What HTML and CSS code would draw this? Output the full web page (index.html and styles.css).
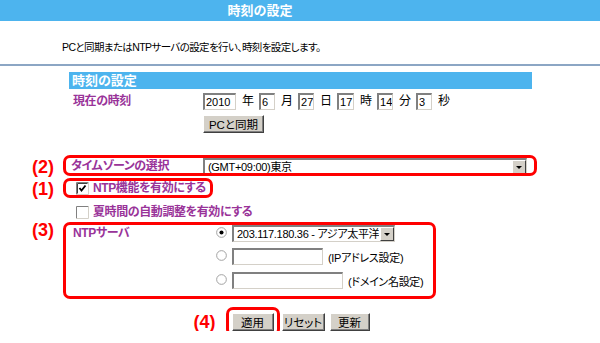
FILE: index.html
```html
<!DOCTYPE html>
<html lang="ja">
<head>
    <meta charset="UTF-8">
    <title>時刻の設定</title>
    <link rel="stylesheet" href="styles.css">
</head>
<body>
    <div class="title">時刻の設定</div>
    <div class="intro">PCと同期またはNTPサーバの設定を行い、時刻を設定します。</div>

    <div class="section">
        <div class="section-head">時刻の設定</div>

        <div class="row time-row">
            <div class="label">現在の時刻</div>
            <div class="fields">
                <input class="txt w33" value="2010"><span class="unit">年</span>
                <input class="txt w16" value="6"><span class="unit">月</span>
                <input class="txt w16" value="27"><span class="unit">日</span>
                <input class="txt w17" value="17"><span class="unit">時</span>
                <input class="txt w16" value="14"><span class="unit">分</span>
                <input class="txt w16" value="3"><span class="unit">秒</span>
            </div>
        </div>
        <div class="row sync-row">
            <div></div>
            <div class="fields"><button class="btn w61">PCと同期</button></div>
        </div>

        <div class="row tz-row">
            <span class="num">(2)</span>
            <span class="mark"></span>
            <div class="label tz-label">タイムゾーンの選択</div>
            <div class="select w324">
                <span class="select-text">(GMT+09:00)東京</span>
                <span class="select-arrow"></span>
            </div>
        </div>

        <div class="check-row ntp-on">
            <span class="num">(1)</span>
            <span class="mark"></span>
            <svg class="box" width="13" height="13" viewBox="0 0 13 13">
                <rect x="0" y="0" width="13" height="13" fill="#fff"/>
                <path d="M0.5 12.5V0.5H12.5" fill="none" stroke="#808080"/>
                <path d="M1.5 11.5V1.5H11.5" fill="none" stroke="#404040"/>
                <path d="M0.5 12.5H12.5V0.5" fill="none" stroke="#d4d0c8"/>
                <path d="M3.5 6L5.5 8.5L9.5 3.5" fill="none" stroke="#000" stroke-width="1.8"/>
            </svg>
            <span class="label-text">NTP機能を有効にする</span>
        </div>
        <div class="check-row dst">
            <svg class="box" width="13" height="13" viewBox="0 0 13 13">
                <rect x="0" y="0" width="13" height="13" fill="#fff"/>
                <path d="M0.5 12.5V0.5H12.5" fill="none" stroke="#808080"/>
                <path d="M0.5 12.5H12.5V0.5" fill="none" stroke="#d4d0c8"/>
            </svg>
            <span class="label-text">夏時間の自動調整を有効にする</span>
        </div>

        <div class="ntp">
            <span class="num">(3)</span>
            <span class="mark"></span>
            <div class="label ntp-label">NTPサーバ</div>
            <div class="ntp-options">
                <div class="opt">
                    <svg class="radio" width="11" height="11" viewBox="0 0 12 12">
                        <circle cx="6" cy="6" r="5.3" fill="#fff" stroke="#9a9a9a"/>
                        <circle cx="6" cy="6" r="2.2" fill="#000"/>
                    </svg>
                    <div class="select w163">
                        <span class="select-text">203.117.180.36 - アジア太平洋</span>
                        <span class="select-arrow"></span>
                    </div>
                </div>
                <div class="opt opt2">
                    <svg class="radio" width="11" height="11" viewBox="0 0 12 12">
                        <circle cx="6" cy="6" r="5.3" fill="#fff" stroke="#9a9a9a"/>
                    </svg>
                    <input class="txt w91" value="">
                    <span class="hint">(IPアドレス設定)</span>
                </div>
                <div class="opt opt3">
                    <svg class="radio" width="11" height="11" viewBox="0 0 12 12">
                        <circle cx="6" cy="6" r="5.3" fill="#fff" stroke="#9a9a9a"/>
                    </svg>
                    <input class="txt w111" value="">
                    <span class="hint">(ドメイン名設定)</span>
                </div>
            </div>
        </div>

        <div class="actions">
            <span class="apply-wrap">
                <span class="num">(4)</span>
                <span class="mark"></span>
                <button class="btn w42">適用</button>
            </span>
            <button class="btn w43">リセット</button>
            <button class="btn w40">更新</button>
        </div>
    </div>
</body>
</html>
```

FILE: styles.css
```css
body {
    margin: 0;
    font-family: "Liberation Sans", "Noto Sans CJK JP", sans-serif;
    font-size: 12px;
    font-feature-settings: "palt";
    color: #000;
    background-color: #fff;
}
.title {
    height: 21px;
    line-height: 21px;
    background-color: #4db4ee;
    color: #fff;
    font-weight: bold;
    font-size: 13px;
    text-align: center;
    padding-right: 80px;
}
.intro {
    height: 45px;
    box-sizing: border-box;
    padding: 18px 0 0 62px;
    line-height: 16px;
    font-size: 10.5px;
    letter-spacing: -0.6px;
    border-bottom: 2px solid #8ca6c4;
}
.section {
    width: 463px;
    margin: 6px 0 0 69px;
}
.section-head {
    height: 17px;
    line-height: 17px;
    background-color: #4db4ee;
    color: #fff;
    font-weight: bold;
    font-size: 13px;
    padding-left: 3px;
}
.row {
    display: grid;
    grid-template-columns: 134px 1fr;
    align-items: center;
    position: relative;
}
.label {
    color: #993399;
    font-weight: bold;
    padding-left: 4px;
    line-height: 17px;
    letter-spacing: -0.4px;
}
.fields {
    display: flex;
    align-items: center;
    line-height: 17px;
}
.time-row {
    margin-top: 4px;
    height: 17px;
}
.sync-row {
    margin-top: 5px;
    height: 18px;
}
.unit {
    padding: 0 5px 0 6px;
}
.txt {
    box-sizing: border-box;
    height: 17px;
    border: 1px solid #d4d0c8;
    border-top: 2px solid #808080;
    border-left: 2px solid #808080;
    padding: 0 0 0 1px;
    font: 11px "Liberation Sans", "Noto Sans CJK JP", sans-serif;
    background-color: #fff;
    outline: none;
}
.w16 { width: 16px; }
.w17 { width: 17px; }
.w33 { width: 33px; }
.w91 { width: 91px; }
.w111 { width: 111px; }
.btn {
    box-sizing: border-box;
    height: 18px;
    padding: 0;
    font: 11.5px "Liberation Sans", "Noto Sans CJK JP", sans-serif;
    font-feature-settings: "palt";
    color: #000;
    background-color: #d4d0c8;
    border: 1px solid;
    border-color: #fff #404040 #404040 #fff;
    box-shadow: inset -1px -1px #808080;
    white-space: nowrap;
}
.w40 { width: 40px; }
.w42 { width: 42px; }
.w43 { width: 43px; }
.w61 { width: 61px; }
.select {
    box-sizing: border-box;
    height: 17px;
    display: flex;
    align-items: center;
    justify-content: space-between;
    background-color: #fff;
    border: 1px solid #d4d0c8;
    border-top: 2px solid #808080;
    border-left: 2px solid #808080;
}
.w324 { width: 324px; }
.w163 { width: 163px; }
.select-text {
    padding-left: 3px;
    line-height: 14px;
    font-size: 11px;
    letter-spacing: -0.3px;
    white-space: nowrap;
    overflow: hidden;
}
.select-arrow {
    box-sizing: border-box;
    flex: none;
    width: 14px;
    height: 14px;
    background-color: #d4d0c8;
    border: 1px solid;
    border-color: #fff #404040 #404040 #fff;
    display: flex;
    align-items: center;
    justify-content: center;
}
.select-arrow::after {
    content: "";
    border-left: 3px solid transparent;
    border-right: 3px solid transparent;
    border-top: 3px solid #000;
}
.tz-row {
    margin-top: 25px;
    height: 17px;
}
.tz-label {
    padding-left: 2px;
}
.check-row {
    position: relative;
    display: flex;
    align-items: center;
    gap: 4px;
    padding-left: 7px;
    height: 15px;
}
.check-row .label-text {
    color: #993399;
    font-weight: bold;
    line-height: 15px;
    letter-spacing: -0.4px;
}
.ntp-on {
    margin-top: 6px;
}
.dst {
    margin-top: 9px;
}
.ntp {
    position: relative;
    display: grid;
    grid-template-columns: 134px 1fr;
    margin-top: 5px;
}
.ntp-label {
    line-height: 17px;
}
.ntp-options {
    padding-left: 13px;
}
.opt {
    display: flex;
    align-items: center;
    gap: 5px;
    height: 17px;
}
.opt .radio {
    margin-top: -3px;
}
.opt2 {
    margin-top: 6px;
}
.opt3 {
    margin-top: 7px;
}
.hint {
    white-space: nowrap;
    font-size: 11px;
    letter-spacing: -0.3px;
}
.actions {
    display: flex;
    justify-content: center;
    gap: 5px;
    margin-top: 24px;
}
.apply-wrap {
    position: relative;
    display: flex;
    margin-right: 3px;
}

/* red annotation marks */
.mark {
    position: absolute;
    box-sizing: border-box;
    border: 3px solid #f00;
    border-radius: 7px;
    pointer-events: none;
}
.tz-row .mark {
    top: -3px;
    bottom: -1px;
    left: -6px;
    right: -5px;
}
.ntp-on .mark {
    top: -3px;
    left: -6px;
    width: 150px;
    height: 20px;
}
.ntp .mark {
    top: -3px;
    left: -6px;
    width: 373px;
    bottom: -10px;
}
.apply-wrap .mark {
    top: -6px;
    left: -6px;
    right: -6px;
    bottom: -5px;
}
.num {
    position: absolute;
    left: -37px;
    top: 50%;
    transform: translateY(-50%);
    color: #f00;
    font: bold 18px "Liberation Sans", sans-serif;
    line-height: 18px;
    white-space: nowrap;
}
.ntp .num {
    top: -4px;
    transform: none;
}
.apply-wrap .num {
    left: -38px;
}
```
